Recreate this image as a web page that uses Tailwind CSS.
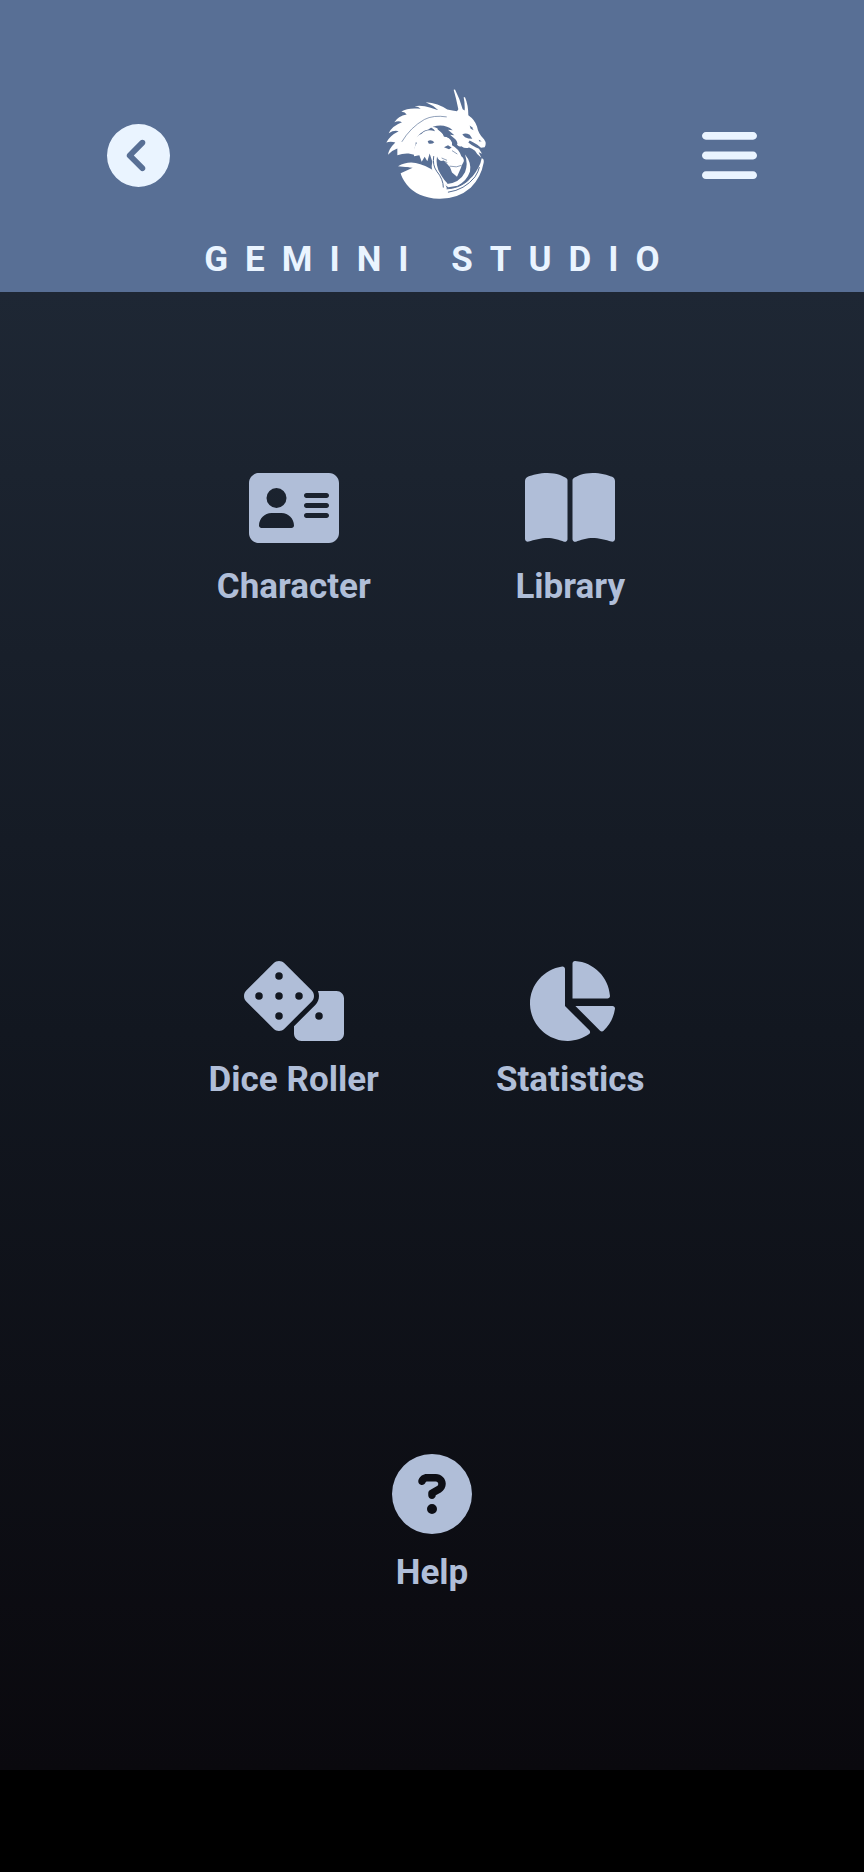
<!DOCTYPE html>
<html lang="en">

<head>
    <meta charset="UTF-8" />
    <meta name="viewport" content="width=device-width, initial-scale=1.0" />
    <title>Gemini Studio</title>
    <script src="https://cdn.jsdelivr.net/npm/@tailwindcss/browser@4"></script>
</head>

<body class="min-h-screen bg-black flex flex-col font-['Roboto',sans-serif] font-bold text-[35px] leading-[42px]">
    <header class="bg-[#586f95] text-[#eaf4ff] pt-[88px] pb-[11px]">
        <div class="flex items-center justify-between px-[107px]">
            <button type="button" aria-label="Back" class="mt-[22px]">
                <svg class="size-[63px]" viewBox="0 0 512 512" fill="currentColor">
                    <path d="M512 256A256 256 0 1 0 0 256a256 256 0 1 0 512 0zM271 135c9.4-9.4 24.6-9.4 33.9 0s9.4 24.6 0 33.9l-87 87 87 87c9.4 9.4 9.4 24.6 0 33.9s-24.6 9.4-33.9 0L167 273c-9.4-9.4-9.4-24.6 0-33.9L271 135z" />
                </svg>
            </button>
            <a href="#" aria-label="Gemini Studio home">
                <svg class="w-[100px] h-[112px]" viewBox="30 25 300 335">
                    <g fill="#fff">
                        <!-- dragon: mane, horns and head -->
                        <path d="M64 226L64 206Q48 211 36 225Q38 207 58 188Q44 184 31 188Q40 168 68 154Q54 150 38 160Q48 138 78 127Q68 121 55 127Q66 109 92 104Q88 97 76 95Q94 84 124 86L134 87Q128 80 116 79Q138 75 164 84L187 91Q172 76 149 67Q187 70 214 89Q230 93 243 94L247 88Q241 58 233 30L237 29Q252 58 260 88L266 92Q267 70 263 52L267 52Q277 75 277 106Q297 120 303 140Q307 163 324 178Q333 190 326 202L315 204L304 195L291 187L281 182L277 188Q287 197 300 203L309 207L318 222L308 217L316 234Q302 224 297 213Q288 205 279 203Q268 208 256 199Q249 202 243 195Q247 187 238 178L222 165L235 166L216 150L230 151Q214 137 193 137Q171 137 157 149Q145 151 133 161Q118 173 119 194Q112 210 121 226L98 221Q80 220 64 226z" />
                        <!-- lion: mane and face -->
                        <path d="M114 229Q111 204 123 189Q116 185 114 190Q117 169 137 162Q150 146 177 154Q171 143 161 143Q179 137 192 153Q202 163 204 171Q220 170 228 188L228 196Q249 207 256 229Q266 237 263 246L257 257L255 264L243 291L228 278L222 262L213 252L203 243Q188 246 183 230Q178 258 193 282Q205 303 215 311L193 323Q189 295 176 281Q163 272 169 246L161 221L154 244L146 231L137 246L130 226z" />
                        <!-- lower body and tail -->
                        <path d="M66 259Q98 241 133 253Q172 264 194 293Q207 307 213 326Q257 326 290 289Q313 260 317 235Q325 236 323 249Q315 293 284 324Q245 358 189 357Q123 354 92 314Q76 292 74 280L110 264Q88 261 66 259z" />
                        <path d="M205 314Q251 311 267 277Q277 253 267 224Q287 248 282 275Q273 302 245 318L217 322z" />
                    </g>
                    <g fill="none" stroke="#586f95" stroke-linecap="round">
                        <path stroke-width="2" d="M78 185Q103 143 145 119Q172 105 211 111" />
                        <path stroke-width="5" d="M72 272Q76 264 96 265" />
                        <path stroke-width="3" d="M217 337Q266 330 297 291Q307 276 310 263" />
                        <path stroke-width="3" d="M213 327Q247 326 275 303Q293 285 302 259" />
                        <path stroke-width="3" d="M173 230Q169 256 182 274Q202 298 202 322" />
                        <path stroke-width="2" d="M198 235L212 241M201 243L213 248M222 259L241 261L255 257M229 213L243 222" />
                    </g>
                    <g fill="#586f95">
                        <path d="M155 184Q165 177 175 187Q168 194 158 191z" />
                        <path d="M184 148L200 144L213 155L225 176L207 170Q200 158 184 148z" />
                        <path d="M204 202L216 196L227 203L219 208z" />
                        <path d="M281 137L288 142L293 151L284 147z" />
                        <path d="M259 164Q268 157 281 165L289 177L277 176L267 172z" />
                        <path d="M308 180L317 184L310 185z" />
                    </g>
                </svg>
            </a>
            <button type="button" aria-label="Menu" class="mt-[22px]">
                <svg class="w-[55px] h-[63px]" viewBox="0 0 448 512" fill="currentColor">
                    <path d="M0 96C0 78.300 14.300 64 32 64H416c17.700 0 32 14.300 32 32s-14.300 32-32 32H32C14.300 128 0 113.700 0 96zM0 256c0-17.700 14.300-32 32-32H416c17.700 0 32 14.300 32 32s-14.300 32-32 32H32c-17.700 0-32-14.300-32-32zM448 416c0 17.700-14.300 32-32 32H32c-17.700 0-32-14.300-32-32s14.300-32 32-32H416c17.700 0 32 14.300 32 32z" />
                </svg>
            </button>
        </div>
        <h1 class="mt-[39px] pl-[17px] text-center tracking-[17px]">GEMINI STUDIO</h1>
    </header>

    <main class="grow flex justify-center mb-[102px] bg-linear-to-b from-[#1e2734] via-[#121720] to-[#0a090e] text-[#b0bed8]">
        <nav class="grid grid-cols-4 grid-rows-3 w-16/25">
            <a href="#character" class="col-span-2 flex flex-col items-center justify-center gap-[18px]">
                <svg class="h-20" viewBox="0 0 576 512" fill="currentColor">
                    <path d="M64 32C28.700 32 0 60.700 0 96V416c0 35.300 28.700 64 64 64H512c35.300 0 64-28.700 64-64V96c0-35.300-28.700-64-64-64H64zm80 256h64c44.200 0 80 35.800 80 80c0 8.800-7.200 16-16 16H80c-8.800 0-16-7.200-16-16c0-44.200 35.800-80 80-80zm-32-96a64 64 0 1 1 128 0 64 64 0 1 1 -128 0zm256-32H496c8.800 0 16 7.200 16 16s-7.200 16-16 16H368c-8.800 0-16-7.200-16-16s7.200-16 16-16zm0 64H496c8.800 0 16 7.200 16 16s-7.200 16-16 16H368c-8.800 0-16-7.200-16-16s7.200-16 16-16zm0 64H496c8.800 0 16 7.200 16 16s-7.200 16-16 16H368c-8.800 0-16-7.200-16-16s7.200-16 16-16z" />
                </svg>
                Character
            </a>
            <a href="#library" class="col-span-2 flex flex-col items-center justify-center gap-[18px]">
                <svg class="h-20" viewBox="0 0 576 512" fill="currentColor">
                    <path d="M249.600 471.500c10.800 3.800 22.400-4.100 22.400-15.500V78.600c0-4.200-1.600-8.400-5-11C247.400 52 202.400 32 144 32C93.500 32 46.300 45.300 18.100 56.100C6.800 60.500 0 71.700 0 83.800V454.100c0 11.900 12.800 20.200 24.100 16.500C55.600 460.100 105.500 448 144 448c33.900 0 79 14 105.600 23.500zm76.800 0C353 462 398.100 448 432 448c38.500 0 88.400 12.100 119.900 22.600c11.300 3.800 24.100-4.600 24.100-16.500V83.800c0-12.100-6.800-23.300-18.100-27.600C529.700 45.300 482.500 32 432 32c-58.400 0-103.400 20-123 35.600c-3.300 2.600-5 6.800-5 11V456c0 11.400 11.700 19.300 22.400 15.500z" />
                </svg>
                Library
            </a>
            <a href="#dice" class="col-span-2 flex flex-col items-center justify-center gap-[18px]">
                <svg class="h-20" viewBox="0 0 640 512" fill="currentColor" fill-rule="evenodd">
                    <path d="M592 192H473.260c12.690 29.590 7.120 65.200-17 89.320L320 417.580V464c0 26.510 21.490 48 48 48h224c26.510 0 48-21.490 48-48V240c0-26.510-21.490-48-48-48zM456 352a24 24 0 1 1 48 0 24 24 0 1 1 -48 0z" />
                    <path d="M433.630 189.300L258.700 14.370c-19.160-19.160-50.230-19.160-69.390 0L14.370 189.300c-19.160 19.160-19.160 50.230 0 69.390L189.300 433.630c19.160 19.160 50.230 19.160 69.390 0L433.630 258.700c19.160-19.170 19.160-50.240 0-69.400zM72 224a24 24 0 1 1 48 0 24 24 0 1 1 -48 0zM200 224a24 24 0 1 1 48 0 24 24 0 1 1 -48 0zM328 224a24 24 0 1 1 48 0 24 24 0 1 1 -48 0zM200 96a24 24 0 1 1 48 0 24 24 0 1 1 -48 0zM200 352a24 24 0 1 1 48 0 24 24 0 1 1 -48 0z" />
                </svg>
                Dice Roller
            </a>
            <a href="#statistics" class="col-span-2 flex flex-col items-center justify-center gap-[18px]">
                <svg class="h-20" viewBox="-32 0 576 512" fill="currentColor">
                    <path d="M527.790 288H290.500l158.030 158.030c6.040 6.040 15.980 6.530 22.190.68 38.700-36.460 65.320-85.610 73.130-140.860 1.340-9.460-6.510-17.850-16.060-17.850zm-15.830-64.800C503.720 103.740 408.260 8.280 288.800.04 279.680-.59 272 7.100 272 16.240V240h223.770c9.140 0 16.820-7.680 16.190-16.800zM224 288V50.710c0-9.550-8.390-17.400-17.840-16.060C86.990 51.490-4.100 155.600.14 280.370 4.500 408.510 114.830 513.590 243.030 511.980c50.400-.63 96.970-16.870 135.260-44.030 7.900-5.600 8.420-17.230 1.570-24.080L224 288z" />
                </svg>
                Statistics
            </a>
            <a href="#help" class="col-span-2 col-start-2 flex flex-col items-center justify-center gap-[18px]">
                <svg class="h-20" viewBox="0 0 512 512" fill="currentColor">
                    <path d="M256 512A256 256 0 1 0 256 0a256 256 0 1 0 0 512zM169.800 165.300c7.900-22.300 29.100-37.300 52.800-37.300h58.300c34.900 0 63.100 28.300 63.100 63.100c0 22.600-12.100 43.500-31.700 54.800L280 264.400c-.2 13-10.900 23.600-24 23.600c-13.300 0-24-10.700-24-24V250.500c0-8.600 4.600-16.500 12.100-20.800l44.300-25.400c4.700-2.700 7.600-7.700 7.600-13.100c0-8.400-6.800-15.100-15.100-15.100H222.600c-3.400 0-6.400 2.100-7.500 5.300l-.4 1.200c-4.400 12.500-18.200 19-30.600 14.600s-19-18.200-14.600-30.600l.4-1.200zM224 352a32 32 0 1 1 64 0 32 32 0 1 1 -64 0z" fill-rule="evenodd" />
                </svg>
                Help
            </a>
        </nav>
    </main>
</body>

</html>
